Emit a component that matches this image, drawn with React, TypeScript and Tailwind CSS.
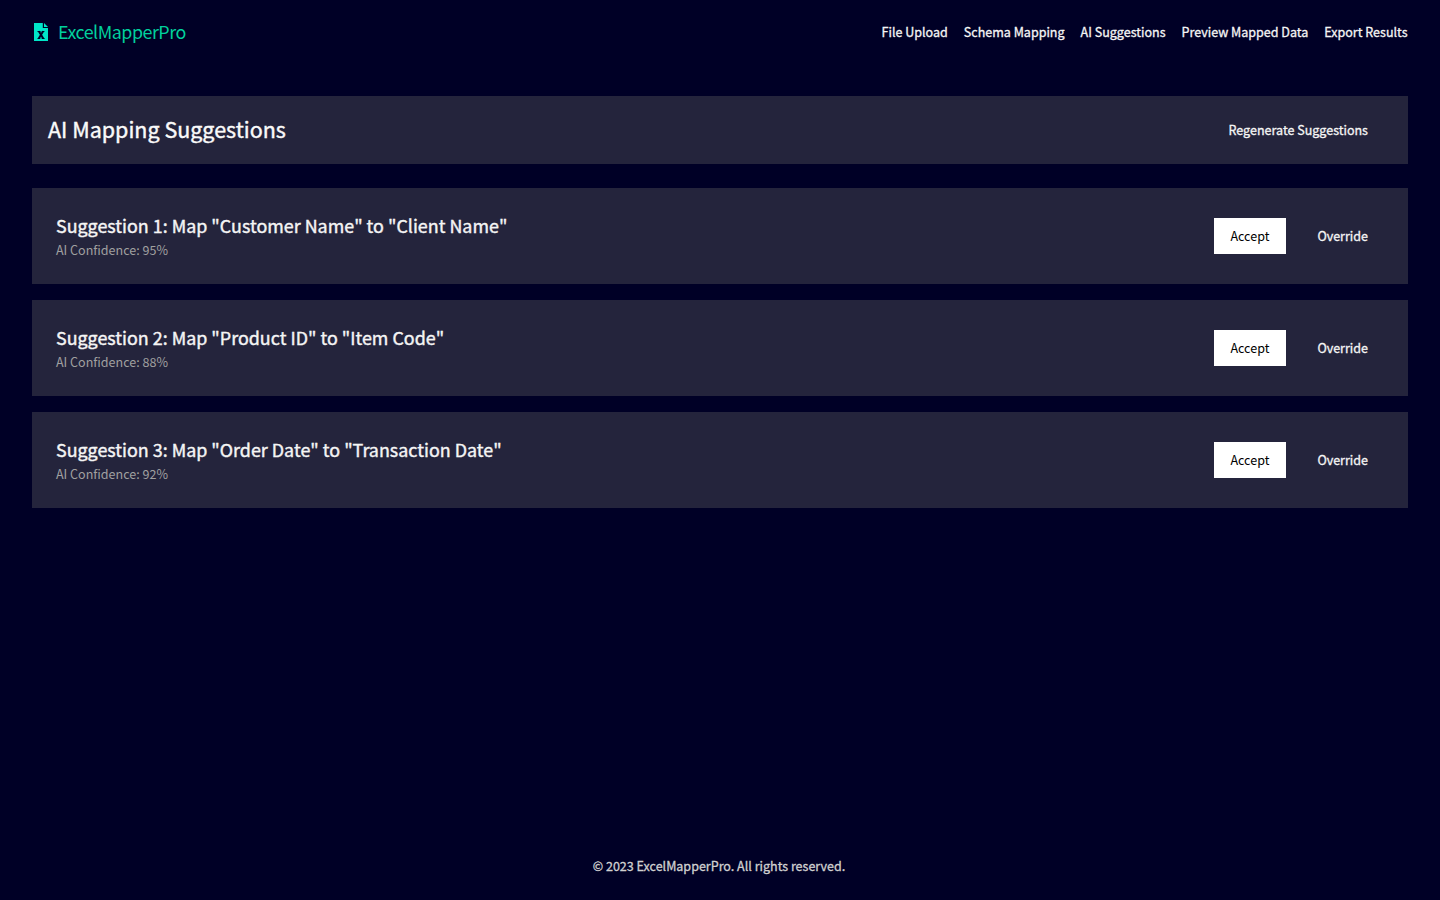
const nav = ["File Upload", "Schema Mapping", "AI Suggestions", "Preview Mapped Data", "Export Results"];
const suggestions = [
  { title: 'Suggestion 1: Map "Customer Name" to "Client Name"', confidence: "95%" },
  { title: 'Suggestion 2: Map "Product ID" to "Item Code"', confidence: "88%" },
  { title: 'Suggestion 3: Map "Order Date" to "Transaction Date"', confidence: "92%" },
];

function SpreadsheetIcon() {
  return (
    <svg viewBox="0 0 14 18" className="mr-2.5 ml-0.5 h-[18px] w-3.5" aria-hidden="true">
      <path fill="#00e6c8" d="M0 0h8.8v5.1H14V18H0z" />
      <path fill="#00e6c8" d="M10 0 14 4H10z" />
      <path
        fill="none"
        stroke="#000026"
        strokeWidth="2"
        d="M4.9 8.3 9.2 15.5M9.1 8.3 4.8 15.5"
      />
      <path
        fill="none"
        stroke="#000026"
        strokeWidth="1"
        d="M3.5 8.5H6.5M7.8 8.5H10.4M3.5 15.5H6.3M7.7 15.5H10.6"
      />
    </svg>
  );
}

export default function App() {
  return (
    <div className="flex h-screen flex-col bg-[#000026] font-['Noto_Sans_CJK_SC',sans-serif] text-[12.54px] leading-5 text-[#f5f5f5]">
      <header className="flex h-16 items-center justify-between px-8">
        <div className="flex items-center text-[17.9px] leading-7 text-[#00d19d]">
          <SpreadsheetIcon />
          <span className="pb-0.5 tracking-[-0.5px]">ExcelMapperPro</span>
        </div>
        <nav className="flex gap-4 pr-[0.5px] [-webkit-text-stroke:0.3px]">
          {nav.map((item) => (
            <a key={item} href="#">{item}</a>
          ))}
        </nav>
      </header>
      <main className="flex-1 p-8">
        <section className="mb-6 flex h-[68px] items-center justify-between bg-[#24243c] p-4">
          <h1 className="pb-0.5 text-[21.5px] leading-8 text-[#fafafa] [-webkit-text-stroke:0.4px]">AI Mapping Suggestions</h1>
          <button className="px-6 py-2 [-webkit-text-stroke:0.3px]">Regenerate Suggestions</button>
        </section>
        <div className="flex flex-col gap-4">
          {suggestions.map((s) => (
            <article key={s.title} className="flex h-24 items-center justify-between bg-[#24243c] pl-6 pr-4">
              <div>
                <h2 className="pb-0.5 text-[17.9px] leading-[26px] [-webkit-text-stroke:0.4px]">{s.title}</h2>
                <p className="text-[#a0a0a0]">AI Confidence: {s.confidence}</p>
              </div>
              <div className="flex items-center gap-[7px]">
                <button className="h-9 w-[72px] bg-white pr-px text-black">Accept</button>
                <button className="h-9 px-6 [-webkit-text-stroke:0.3px]">Override</button>
              </div>
            </article>
          ))}
        </div>
      </main>
      <footer className="flex h-[68px] items-center justify-center pr-0.5 text-[#d0d0d0] [-webkit-text-stroke:0.3px]">
        © 2023 ExcelMapperPro. All rights reserved.
      </footer>
    </div>
  );
}
